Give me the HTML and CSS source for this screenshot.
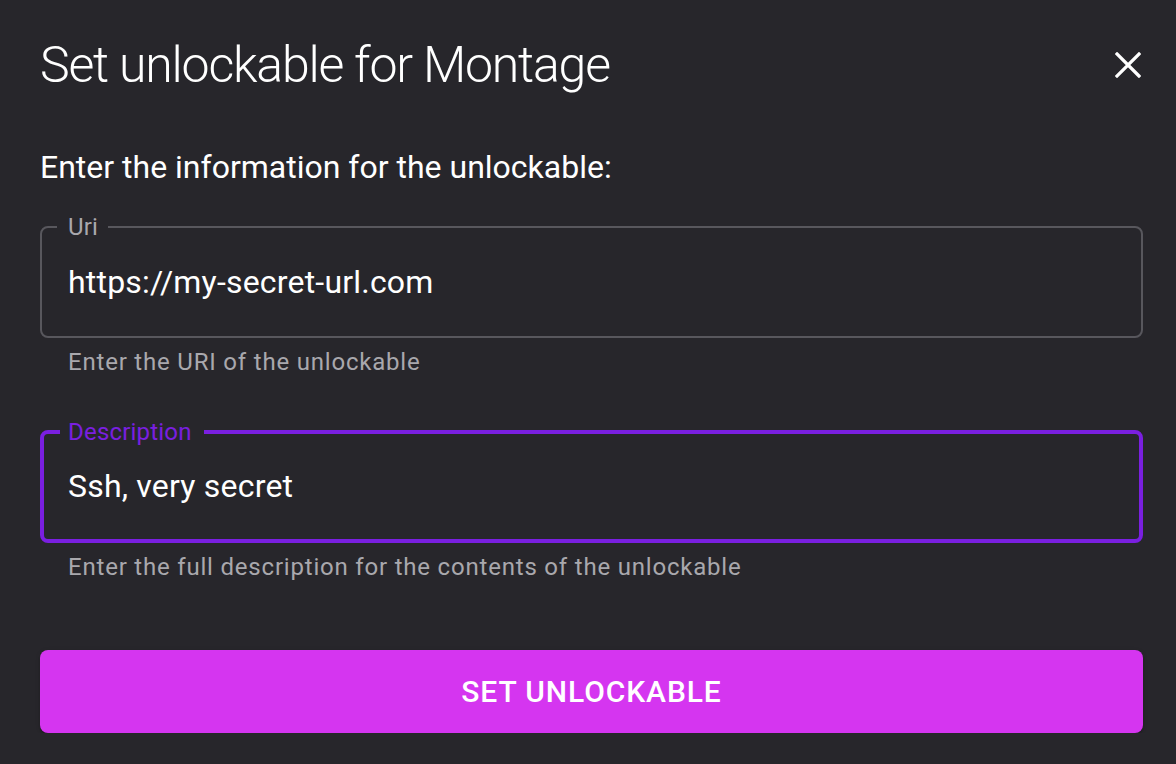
FILE: index.html
```html
<!DOCTYPE html>
<html lang="en">

<head>
  <meta charset="UTF-8">
  <meta name="viewport" content="width=device-width, initial-scale=1.0">
  <title>Set unlockable</title>
  <link rel="stylesheet" href="styles.css">
</head>

<body>
  <div class="dialog">
    <div class="dialog-header">
      <h1 class="dialog-title">Set unlockable for Montage</h1>
      <button class="close-btn" aria-label="close">
        <svg width="26" height="26" viewBox="0 0 26 26">
          <path d="M2 2 L24 24 M24 2 L2 24" stroke="#fff" stroke-width="3.2" stroke-linecap="square" fill="none"/>
        </svg>
      </button>
    </div>

    <p class="intro">Enter the information for the unlockable:</p>

    <div class="field">
      <fieldset class="outline">
        <legend>Uri</legend>
        <div class="value">https://my-secret-url.com</div>
      </fieldset>
      <p class="helper">Enter the URI of the unlockable</p>
    </div>

    <div class="field">
      <fieldset class="outline focused">
        <legend>Description</legend>
        <div class="value">Ssh, very secret</div>
      </fieldset>
      <p class="helper">Enter the full description for the contents of the unlockable</p>
    </div>

    <button class="submit-btn">Set unlockable</button>
  </div>
</body>
</html>
```

FILE: styles.css
```css
body {
  font-family: Roboto, "Noto Sans", Arial, sans-serif;
  background-color: #27262b;
  color: #fff;
  margin: 0;
  padding: 0;
}

.dialog {
  padding: 0 33px 0 40px;
}

.dialog-header {
  display: flex;
  align-items: center;
  justify-content: space-between;
  height: 130px;
}

.dialog-title {
  margin: 0;
  font-size: 50px;
  font-weight: 300;
  letter-spacing: -1.2px;
  line-height: 1.2;
}

.close-btn {
  background: none;
  border: none;
  padding: 0;
  margin-right: 2px;
  width: 26px;
  height: 26px;
  cursor: pointer;
}

.intro {
  margin: 17px 0 24px 0;
  font-size: 32px;
  font-weight: 400;
  line-height: 1.3;
}

.field {
  margin-bottom: 40px;
}

.outline {
  margin: 0;
  padding: 0 24px 0 15px;
  border: 2px solid #58575d;
  border-radius: 8px;
  height: 125px;
  box-sizing: border-box;
}

.outline legend {
  padding: 0 10px 0 11px;
  font-size: 24px;
  line-height: 28px;
  color: #a9a8ad;
  letter-spacing: 0.2px;
}

.outline.focused {
  border: 4px solid #7a1fe0;
  padding: 0 22px 0 16px;
}

.outline.focused legend {
  color: #7a1fe0;
  padding: 0 12px 0 8px;
}

.value {
  font-size: 32px;
  line-height: 38px;
  padding: 22px 0 0 11px;
  letter-spacing: 0.2px;
}

.outline.focused .value {
  padding: 21px 0 0 8px;
}

.helper {
  margin: 8px 0 0 28px;
  font-size: 24px;
  line-height: 32px;
  color: #a9a8ad;
  letter-spacing: 0.8px;
}

.submit-btn {
  display: block;
  width: 100%;
  height: 83px;
  margin-top: 67px;
  border: none;
  border-radius: 8px;
  background-color: #d535f0;
  color: #fff;
  font-family: Roboto, "Noto Sans", Arial, sans-serif;
  font-size: 30px;
  font-weight: 500;
  letter-spacing: 0.9px;
  text-transform: uppercase;
  box-shadow: 0 3px 1px -2px rgba(0, 0, 0, 0.2), 0 2px 2px 0 rgba(0, 0, 0, 0.14), 0 1px 5px 0 rgba(0, 0, 0, 0.12);
}
```
